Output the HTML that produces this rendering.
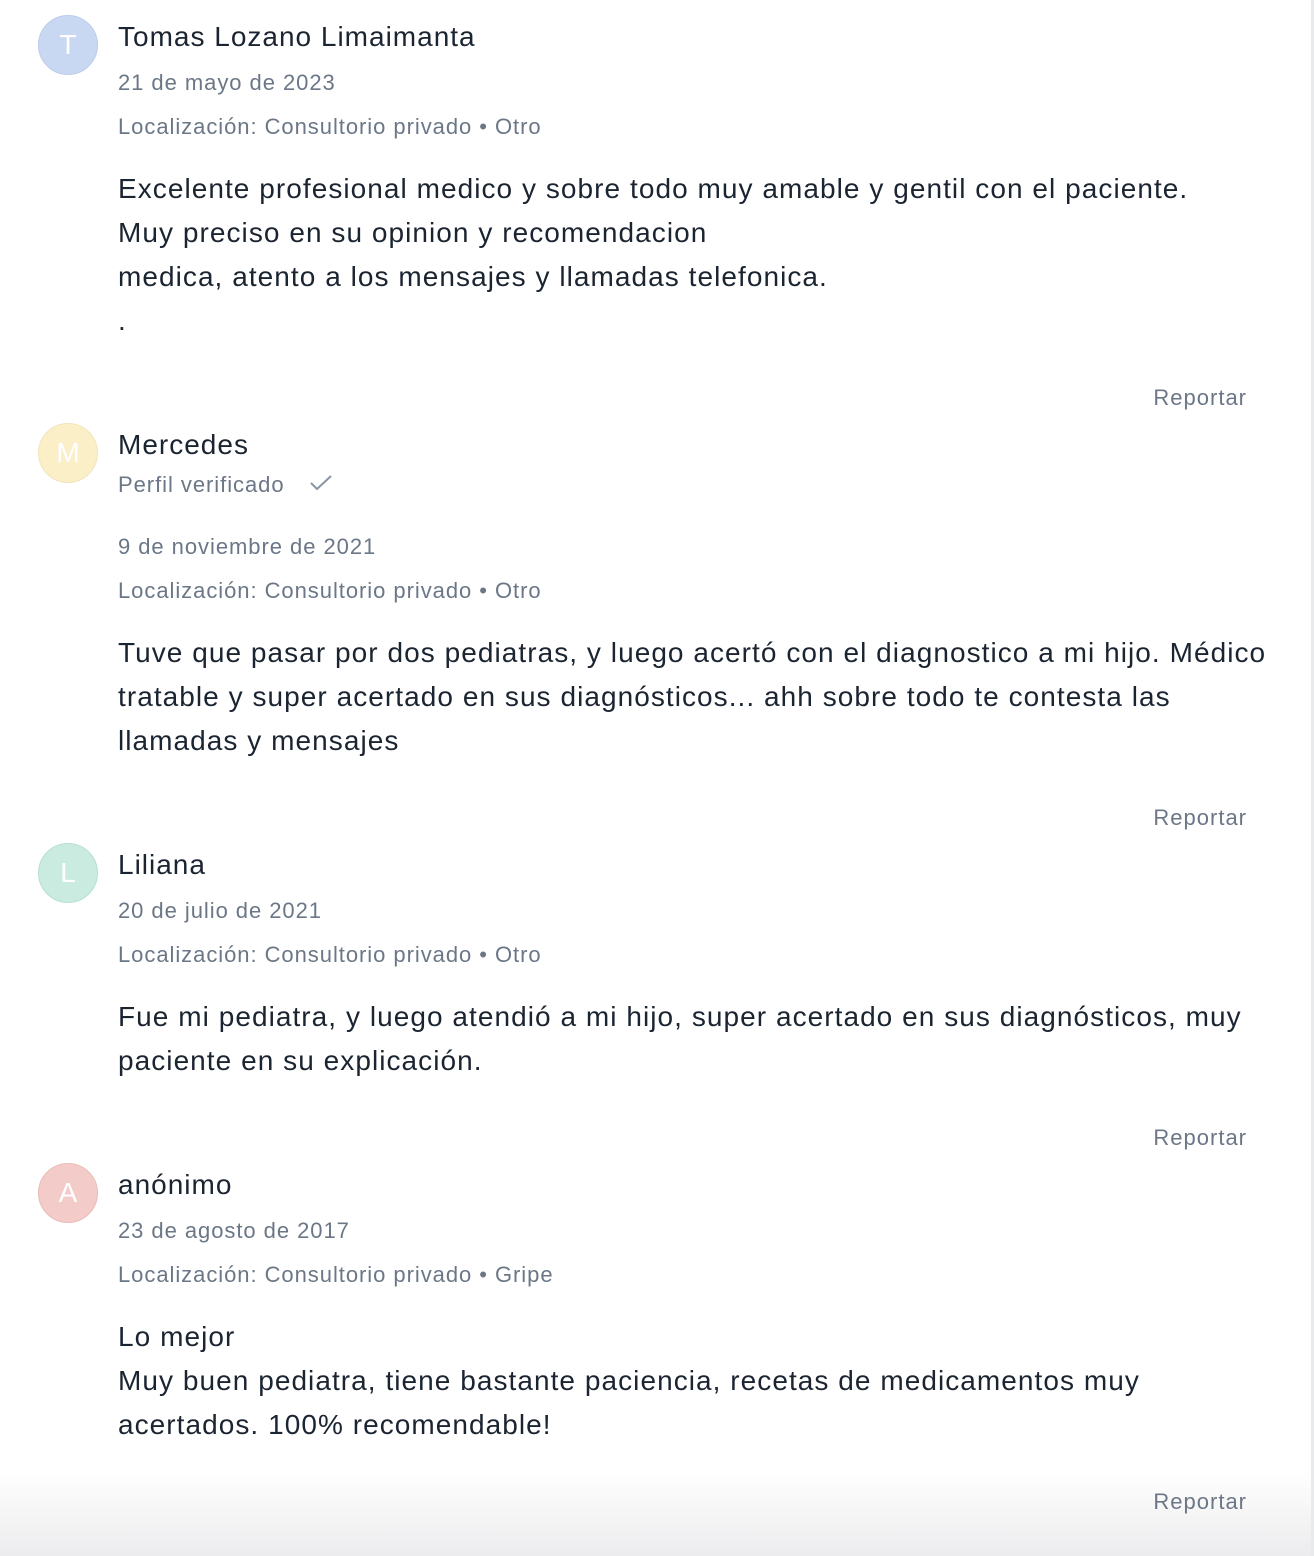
<!DOCTYPE html>
<html><head><meta charset="utf-8"><style>
html,body{margin:0;padding:0;background:#fff;width:1314px;height:1556px;overflow:hidden;position:relative;font-family:"Liberation Sans",Arial,sans-serif}
.t{position:absolute;left:118px;line-height:44px;white-space:nowrap}
.n{font-size:28px;color:#1b2431;letter-spacing:1px}
.m{font-size:22px;color:#6b7787;letter-spacing:0.95px}
.b{font-size:28px;color:#1b2431;letter-spacing:1.05px}
.r{position:absolute;right:67px;line-height:44px;font-size:22px;color:#6b7787;letter-spacing:1px}
.av{position:absolute;left:38px;width:58px;height:58px;border-radius:50%;color:#fff;font-size:28px;text-align:center;line-height:58px}
.strip{position:absolute;right:0;top:0;width:3px;height:1556px;background:#e9eaec}
.fade{position:absolute;left:0;right:0;top:1470px;height:86px;background:linear-gradient(#fff,#ececee)}
</style></head><body>
<div class="fade"></div>
<div class="strip"></div>

<div class="av" style="top:15px;background:#c9d8f2;border:1px solid #bccde9">T</div>
<div class="t n" style="top:15px">Tomas Lozano Limaimanta</div>
<div class="t m" style="top:61px">21 de mayo de 2023</div>
<div class="t m" style="top:105px">Localización: Consultorio privado • Otro</div>
<div class="t b" style="top:167px">Excelente profesional medico y sobre todo muy amable y gentil con el paciente.</div>
<div class="t b" style="top:211px">Muy preciso en su opinion y recomendacion</div>
<div class="t b" style="top:255px">medica, atento a los mensajes y llamadas telefonica.</div>
<div class="t b" style="top:299px">.</div>
<div class="r" style="top:376px">Reportar</div>

<div class="av" style="top:423px;background:#fbefc8;border:1px solid #f2e4bb">M</div>
<div class="t n" style="top:423px">Mercedes</div>
<div class="t m" style="top:463px">Perfil verificado <svg width="26" height="20" viewBox="0 0 26 20" style="margin-left:16px;vertical-align:-1px"><path d="M3 10 L9 16 L23 3" fill="none" stroke="#8a94a2" stroke-width="2"/></svg></div>
<div class="t m" style="top:525px">9 de noviembre de 2021</div>
<div class="t m" style="top:569px">Localización: Consultorio privado • Otro</div>
<div class="t b" style="top:631px">Tuve que pasar por dos pediatras, y luego acertó con el diagnostico a mi hijo. Médico</div>
<div class="t b" style="top:675px">tratable y super acertado en sus diagnósticos... ahh sobre todo te contesta las</div>
<div class="t b" style="top:719px">llamadas y mensajes</div>
<div class="r" style="top:796px">Reportar</div>

<div class="av" style="top:843px;background:#c9ebe0;border:1px solid #b9e0d3">L</div>
<div class="t n" style="top:843px">Liliana</div>
<div class="t m" style="top:889px">20 de julio de 2021</div>
<div class="t m" style="top:933px">Localización: Consultorio privado • Otro</div>
<div class="t b" style="top:995px">Fue mi pediatra, y luego atendió a mi hijo, super acertado en sus diagnósticos, muy</div>
<div class="t b" style="top:1039px">paciente en su explicación.</div>
<div class="r" style="top:1116px">Reportar</div>

<div class="av" style="top:1163px;background:#f3cbc8;border:1px solid #e9bcb9">A</div>
<div class="t n" style="top:1163px">anónimo</div>
<div class="t m" style="top:1209px">23 de agosto de 2017</div>
<div class="t m" style="top:1253px">Localización: Consultorio privado • Gripe</div>
<div class="t b" style="top:1315px">Lo mejor</div>
<div class="t b" style="top:1359px">Muy buen pediatra, tiene bastante paciencia, recetas de medicamentos muy</div>
<div class="t b" style="top:1403px">acertados. 100% recomendable!</div>
<div class="r" style="top:1480px">Reportar</div>
</body></html>
